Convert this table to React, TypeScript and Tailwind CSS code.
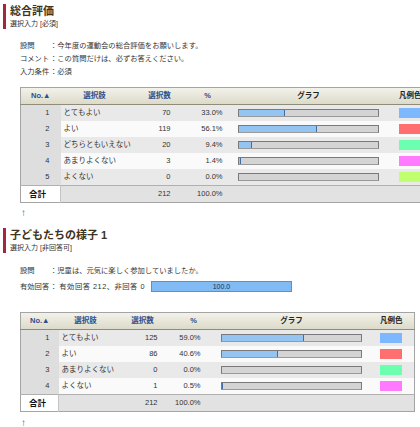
type Row = { no: number; label: string; count: number; pct: string; value: number; color: string };

const q1: Row[] = [
  { no: 1, label: "とてもよい", count: 70, pct: "33.0%", value: 33.0, color: "#7db8ff" },
  { no: 2, label: "よい", count: 119, pct: "56.1%", value: 56.1, color: "#ff6f6f" },
  { no: 3, label: "どちらともいえない", count: 20, pct: "9.4%", value: 9.4, color: "#6dffb0" },
  { no: 4, label: "あまりよくない", count: 3, pct: "1.4%", value: 1.4, color: "#ff7aff" },
  { no: 5, label: "よくない", count: 0, pct: "0.0%", value: 0, color: "#bfff70" },
];

const q2: Row[] = [
  { no: 1, label: "とてもよい", count: 125, pct: "59.0%", value: 59.0, color: "#7db8ff" },
  { no: 2, label: "よい", count: 86, pct: "40.6%", value: 40.6, color: "#ff6f6f" },
  { no: 3, label: "あまりよくない", count: 0, pct: "0.0%", value: 0, color: "#6dffb0" },
  { no: 4, label: "よくない", count: 1, pct: "0.5%", value: 0.5, color: "#ff7aff" },
];

type Layout = {
  cols: number[];
  noPad: string;
  countPad: string;
  pctPad: string;
};

function Bar({ value }: { value: number }) {
  const w = Math.round((139 * value) / 100);
  return (
    <div className="mx-auto h-[8px] w-[141px] border border-[#7a7a7a] border-b-[#9a9a9a] bg-[#d4d4d4]">
      {w > 0 && (
        <div
          className="h-full border-r border-[#3f6ea8] bg-[#94c4f2]"
          style={{ width: w }}
        />
      )}
    </div>
  );
}

function SectionHead({ title, sub }: { title: string; sub: string }) {
  return (
    <div className="ml-[3px] border-l-[3px] border-[#a3283f] pl-[4px]">
      <div className="text-[11px] font-bold leading-[15px] text-[#3f3420]">{title}</div>
      <div className="text-[7px] leading-[10px] text-[#333]">{sub}</div>
    </div>
  );
}

function ResultTable({ rows, total, layout, width }: { rows: Row[]; total: number; layout: Layout; width: number }) {
  const th = "h-[16px] p-0 text-[7.5px] font-bold text-[#2d4f8c]";
  return (
    <table
      className="ml-[20px] table-fixed border-collapse whitespace-nowrap border border-[#a4a4a4] text-[7.5px] leading-[16px] text-[#333]"
      style={{ width }}
    >
      <colgroup>
        {layout.cols.map((c, i) => (
          <col key={i} style={{ width: c }} />
        ))}
      </colgroup>
      <thead>
        <tr className="border-b border-[#8f8d7a] bg-gradient-to-b from-[#f3f2ea] to-[#dcdac9]">
          <th className={th}>No.▲</th>
          <th className={th}>選択肢</th>
          <th className={th}>選択数</th>
          <th className={th}>%</th>
          <th className={`${th} text-[#222]`}>グラフ</th>
          <th className={`${th} text-[#222]`}>凡例色</th>
        </tr>
      </thead>
      <tbody>
        {rows.map((r, i) => (
          <tr key={r.no} className={i % 2 === 0 ? "bg-[#e9e9e9]" : "bg-[#fafafa]"}>
            <td className={`h-[16px] bg-[#dedede] p-0 text-right ${layout.noPad}`}>{r.no}</td>
            <td className="p-0 pl-[3px] text-left">{r.label}</td>
            <td className={`p-0 text-right ${layout.countPad}`}>{r.count}</td>
            <td className={`p-0 text-right ${layout.pctPad}`}>{r.pct}</td>
            <td className="p-0">
              <Bar value={r.value} />
            </td>
            <td className="p-0">
              <div className="mx-auto h-[10px] w-[22px]" style={{ background: r.color }} />
            </td>
          </tr>
        ))}
        <tr className="border-t border-[#b0b0b0] bg-[#e2e2e2]">
          <td className="h-[16px] border-r border-[#c4c4c4] bg-white p-0 pl-[8px] text-left text-[8.5px] font-bold text-[#111]">
            合計
          </td>
          <td className="p-0" />
          <td className={`p-0 text-right ${layout.countPad}`}>{total}</td>
          <td className={`p-0 text-right ${layout.pctPad}`}>100.0%</td>
          <td className="p-0" />
          <td className="p-0" />
        </tr>
      </tbody>
    </table>
  );
}

function Info({ label, children }: { label: string; children: React.ReactNode }) {
  return (
    <div className="flex items-center whitespace-nowrap leading-[13px]">
      <span className="w-[30px] shrink-0">{label}</span>
      <span className="shrink-0">：</span>
      <span className="flex items-center">{children}</span>
    </div>
  );
}

export default function App() {
  return (
    <div className="h-[427px] w-[420px] overflow-hidden bg-white pt-[4px] font-[family-name:'Liberation_Sans','Noto_Sans_CJK_JP',sans-serif] text-[7.3px] text-[#333]">
      <SectionHead title="総合評価" sub="選択入力 [必須]" />

      <div className="mt-[10px] pl-[20px]">
        <Info label="設問">今年度の運動会の総合評価をお願いします。</Info>
        <Info label="コメント">この質問だけは、必ずお答えください。</Info>
        <Info label="入力条件">必須</Info>
      </div>

      <div className="mt-[9px]">
        <ResultTable
          rows={q1}
          total={212}
          width={408}
          layout={{ cols: [40, 68, 62, 34, 168, 36], noPad: "pr-[11px]", countPad: "pr-[20px]", pctPad: "pr-[2px]" }}
        />
      </div>

      <div className="ml-[21px] mt-[3px] text-[10px] leading-[14px] text-[#3a64a8]">↑</div>

      <div className="mt-[8px]">
        <SectionHead title="子どもたちの様子 1" sub="選択入力 [非回答可]" />
      </div>

      <div className="mt-[11px] pl-[20px]">
        <Info label="設問">児童は、元気に楽しく参加していましたか。</Info>
        <div className="mt-[3px] flex items-center whitespace-nowrap leading-[13px]">
          <span className="w-[30px] shrink-0">有効回答</span>
          <span className="shrink-0">：</span>
          <span className="ml-[2px] tracking-[0.5px]">有効回答 212、非回答 0</span>
          <div className="ml-[6px] h-[11px] w-[141px] border border-[#5d8fcb] bg-[#80bbf6] text-center text-[7px] leading-[9px] text-[#1d2f55]">
            100.0
          </div>
        </div>
      </div>

      <div className="mt-[19px]">
        <ResultTable
          rows={q2}
          total={212}
          width={394}
          layout={{ cols: [38, 54, 60, 42, 154, 46], noPad: "pr-[9px]", countPad: "pr-[15px]", pctPad: "pr-[14px]" }}
        />
      </div>

      <div className="ml-[21px] mt-[4px] text-[10px] leading-[14px] text-[#3a64a8]">↑</div>
    </div>
  );
}
